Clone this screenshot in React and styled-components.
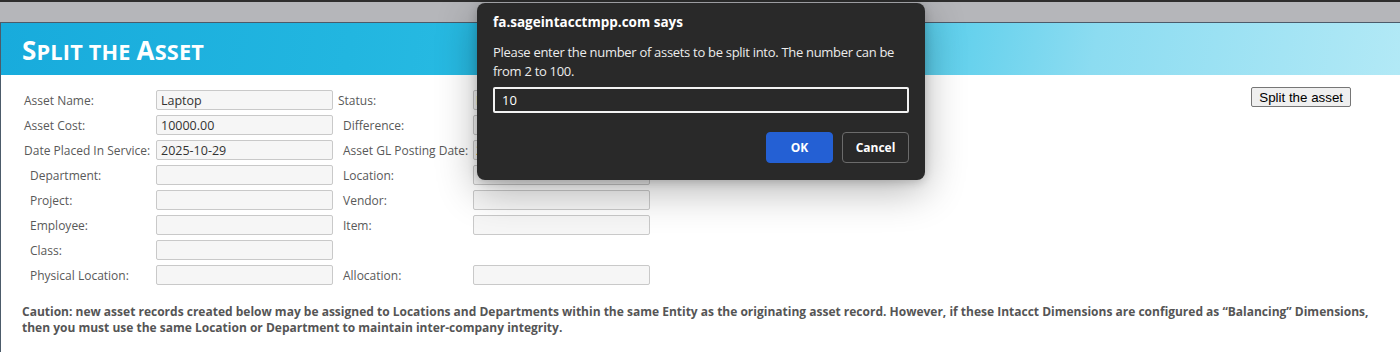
import styled, { createGlobalStyle } from "styled-components";

const GlobalStyle = createGlobalStyle`
  html, body {
    margin: 0;
    padding: 0;
    background: #fff;
    overflow: hidden;
  }
  body {
    font-family: "Open Sans", "Noto Sans", sans-serif;
  }
`;

const Screen = styled.div`
  position: relative;
  width: 1400px;
  height: 352px;
  background: #fff;
  border-top: 2px solid #2e2e2e;
  box-sizing: border-box;
`;

const Toolbar = styled.div`
  height: 20px;
  background: #b5b6ba;
  border-bottom: 1px solid #4c5b6a;
`;

const Page = styled.div`
  border-left: 1px solid #4c5b6a;
  height: 329px;
`;

const Header = styled.div`
  height: 52px;
  display: flex;
  align-items: center;
  padding-left: 21px;
  background: linear-gradient(
    100deg,
    #18abdc 0%,
    #22b6e0 25%,
    #2fbfe5 45%,
    #56cdeb 65%,
    #8cdcf1 78%,
    #b2e9f6 100%
  );
`;

const Title = styled.h1`
  margin: 0;
  font-family: "Open Sans", sans-serif;
  font-weight: 700;
  font-size: 21.7px;
  text-transform: uppercase;
  letter-spacing: 0.2px;
  color: #fff;
  padding-top: 1px;
`;

const Initial = styled.span`
  font-size: 26px;
`;

const Body = styled.div`
  display: flex;
  align-items: flex-start;
  padding: 13px 49px 0 23px;
`;

const Form = styled.div`
  display: grid;
  grid-template-columns: 132px 177px 140px 177px;
  grid-auto-rows: 20px;
  row-gap: 5px;
  margin-top: 2px;
`;

const Label = styled.div`
  display: flex;
  align-items: center;
  padding-left: ${(p) => p.$indent}px;
  font-size: 12px;
  color: #595959;
  white-space: nowrap;
`;

const Field = styled.div`
  box-sizing: border-box;
  height: 20px;
  border: 1px solid #c9c9c9;
  border-radius: 2px;
  background: #f6f6f6;
  padding: 0 ${(p) => (p.$warn ? 2 : 4)}px;
  display: flex;
  align-items: center;
  font-size: 12.5px;
  color: ${(p) => (p.$warn ? "#d38b1f" : "#333")};
`;

const Empty = styled.div``;

const Spacer = styled.div`
  flex: 1;
`;

const ActionButton = styled.button`
  font-family: "Liberation Sans", Arial, sans-serif;
  font-size: 13.33px;
  color: #000;
  background: #efefef;
  border: 1px solid #767676;
  border-radius: 2px;
  padding: 1px 7px;
  height: 20px;
  margin-top: -1px;
`;

const Caution = styled.p`
  margin: 19px 20px 0 21px;
  font-family: "Open Sans", sans-serif;
  font-weight: 700;
  font-size: 12px;
  line-height: 16px;
  color: #555;
`;

const Dialog = styled.div`
  position: absolute;
  left: 477px;
  top: 1px;
  width: 448px;
  height: 177px;
  box-sizing: border-box;
  padding: 10px 16px 0 16px;
  background: #292929;
  border-radius: 8px;
  box-shadow: 0 10px 40px rgba(0, 0, 0, 0.3), 0 2px 10px rgba(0, 0, 0, 0.18);
  color: #fff;
  font-family: "Open Sans", sans-serif;
`;

const DialogTitle = styled.div`
  font-size: 13.5px;
  font-weight: 700;
  line-height: 18px;
`;

const DialogText = styled.div`
  margin-top: 12px;
  font-size: 13px;
  line-height: 19px;
  letter-spacing: -0.3px;
  color: #ececec;
`;

const DialogInput = styled.div`
  box-sizing: border-box;
  margin-top: 6px;
  height: 26px;
  border: 2px solid #f2f2f2;
  border-radius: 2px;
  padding-left: 7px;
  display: flex;
  align-items: center;
  font-size: 13px;
  color: #fff;
`;

const DialogActions = styled.div`
  display: flex;
  justify-content: flex-end;
  gap: 9px;
  margin-top: 19px;
`;

const DialogButton = styled.button`
  width: 67px;
  height: 31px;
  border-radius: 4px;
  font-family: "Open Sans", sans-serif;
  font-size: 12px;
  font-weight: 700;
  color: #fff;
  background: ${(p) => (p.$primary ? "#2460d4" : "#292929")};
  border: 1px solid ${(p) => (p.$primary ? "#2460d4" : "#6b6b6b")};
`;

const rows = [
  ["Asset Name:", 0, "Laptop", false, "Status:", 5, "In Service", true],
  ["Asset Cost:", 0, "10000.00", false, "Difference:", 10, "", false],
  ["Date Placed In Service:", 0, "2025-10-29", false, "Asset GL Posting Date:", 10, "2025-10-29", true],
  ["Department:", 6, "", false, "Location:", 10, "", false],
  ["Project:", 6, "", false, "Vendor:", 10, "", false],
  ["Employee:", 6, "", false, "Item:", 10, "", false],
  ["Class:", 6, "", false, null],
  ["Physical Location:", 6, "", false, "Allocation:", 10, "", false],
];

const App = () => {
  return (
    <Screen>
      <GlobalStyle />
      <Toolbar />
      <Page>
        <Header>
          <Title>
            <Initial>S</Initial>plit the <Initial>A</Initial>sset
          </Title>
        </Header>
        <Body>
          <Form>
            {rows.map(([l1, i1, v1, w1, l2, i2, v2, w2]) => (
              <>
                <Label key={l1} $indent={i1}>
                  {l1}
                </Label>
                <Field $warn={w1}>{v1}</Field>
                {l2 ? (
                  <>
                    <Label $indent={i2}>{l2}</Label>
                    <Field $warn={w2}>{v2}</Field>
                  </>
                ) : (
                  <>
                    <Empty />
                    <Empty />
                  </>
                )}
              </>
            ))}
          </Form>
          <Spacer />
          <ActionButton>Split the asset</ActionButton>
        </Body>
        <Caution>
          Caution: new asset records created below may be assigned to Locations
          and Departments within the same Entity as the originating asset
          record. However, if these Intacct Dimensions are configured as
          “Balancing” Dimensions, then you must use the same Location or
          Department to maintain inter-company integrity.
        </Caution>
      </Page>
      <Dialog>
        <DialogTitle>fa.sageintacctmpp.com says</DialogTitle>
        <DialogText>
          Please enter the number of assets to be split into. The number can be
          from 2 to 100.
        </DialogText>
        <DialogInput>10</DialogInput>
        <DialogActions>
          <DialogButton $primary>OK</DialogButton>
          <DialogButton>Cancel</DialogButton>
        </DialogActions>
      </Dialog>
    </Screen>
  );
};

export default App;
